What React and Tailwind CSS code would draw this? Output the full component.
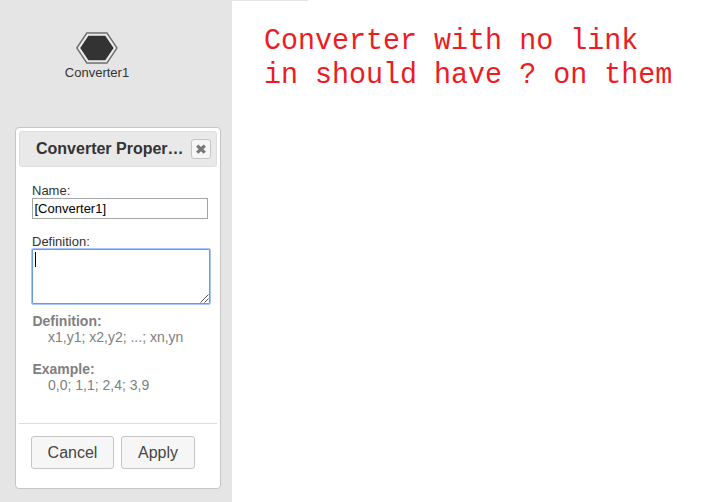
const sans = "font-['Liberation_Sans',Arial,sans-serif]";

function Converter() {
  return (
    <div className="flex w-[194px] flex-col items-center pt-8">
      <svg width="42" height="32" viewBox="0 0 42 32" className="block">
        <polygon points="0.8,16 10.8,1 31,1 41,16 31,31 10.8,31" fill="#ececec" stroke="#6e6e6e" strokeWidth="1.4" />
        <polygon points="4.2,16 12.4,3.7 29.3,3.7 37.6,16 29.3,28.3 12.4,28.3" fill="#333" />
      </svg>
      <div className="mt-px text-[13px] leading-4 text-[#333]">Converter1</div>
    </div>
  );
}

function Dialog() {
  return (
    <div className="mt-[46px] ml-[15px] flex h-[362px] w-[206px] flex-col rounded-[4px] border border-[#c5c5c5] bg-white p-[3px]">
      <div className="flex h-[36px] shrink-0 items-center rounded-[3px] border border-[#dddddd] bg-[#e9e9e9] pl-4">
        <div className="w-[150px] shrink-0 text-[16px] leading-5 font-bold whitespace-nowrap text-[#333]">Converter Proper…</div>
        <button className="ml-[5px] flex h-5 w-5 shrink-0 items-center justify-center rounded-[3px] border border-[#c5c5c5] bg-[#f6f6f6]">
          <svg width="10" height="10" viewBox="0 0 10 10">
            <path d="M1.2 1.6 8.8 8.6M8.8 1.6 1.2 8.6" stroke="#777" strokeWidth="3.2" />
          </svg>
        </button>
      </div>
      <div className="flex h-[256px] shrink-0 flex-col pt-4 pl-[13px] text-[13px] leading-[15px] text-[#333]">
        <label>Name:</label>
        <div className="h-[21px] w-[176px] border border-[#a6a6a6] pl-[1.5px] leading-[19px] text-black">[Converter1]</div>
        <label className="mt-[15px]">Definition:</label>
        <div className="-mt-px -ml-px flex h-[57px] w-[180px] rounded-[2px] border border-[#a8c7f8] bg-white pt-[3px] pl-[3px] ring-1 ring-[#6c9ae0] ring-inset">
          <span className="h-[15px] w-px bg-black" />
          <svg width="9" height="9" viewBox="0 0 9 9" className="mt-auto mr-px mb-px ml-auto">
            <path d="M0.5 8.5 8.5 0.5M4.5 8.5 8.5 4.5" stroke="#555" strokeWidth="1" />
          </svg>
        </div>
        <div className="mt-2 text-[14px] leading-4 text-[#808080]">
          <div className="pl-[0.4px] font-bold">Definition:</div>
          <div className="pl-4">x1,y1; x2,y2; ...; xn,yn</div>
          <div className="mt-4 pl-[0.4px] font-bold">Example:</div>
          <div className="pl-4">0,0; 1,1; 2,4; 3,9</div>
        </div>
      </div>
      <div className="flex gap-[7px] border-t border-[#dddddd] pt-3 pl-3 text-[16px] text-[#454545]">
        <button className="h-[33px] w-[83px] rounded-[3px] border border-[#c5c5c5] bg-[#f6f6f6]">Cancel</button>
        <button className="h-[33px] w-[74px] rounded-[3px] border border-[#c5c5c5] bg-[#f6f6f6]">Apply</button>
      </div>
    </div>
  );
}

export default function App() {
  return (
    <div className="flex h-[502px] w-[704px] overflow-hidden bg-white">
      <div className={`w-[232px] shrink-0 bg-[#e5e5e5] ${sans}`}>
        <Converter />
        <Dialog />
      </div>
      <div className="flex-1">
        <div className="h-px w-[76px] bg-[#e5e5e5]" />
        <p className="mt-[27px] ml-[32px] origin-bottom-left scale-y-[1.04] font-['Liberation_Mono','Courier_New',monospace] text-[28.35px] leading-[32px] whitespace-nowrap text-[#ed1c24]">
          Converter with no link
          <br />
          in should have ? on them
        </p>
      </div>
    </div>
  );
}
